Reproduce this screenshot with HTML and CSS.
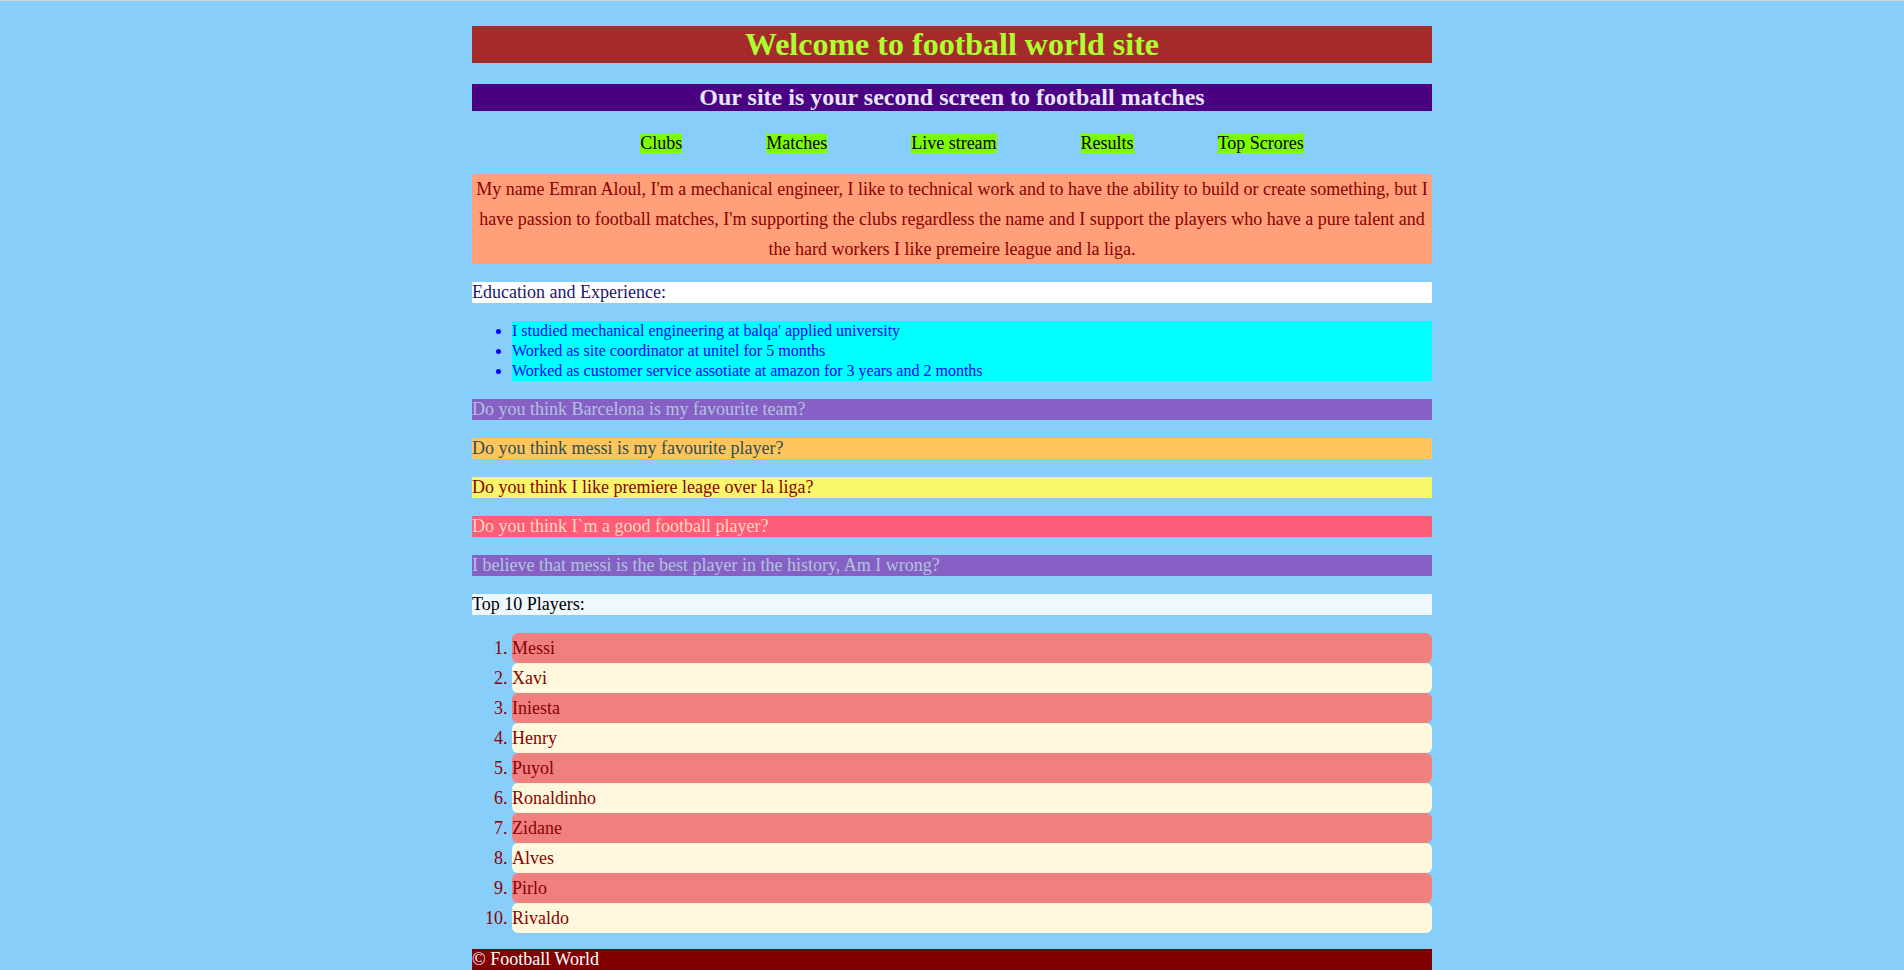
FILE: index.html
```html
<!DOCTYPE html>
<html lang="en">
<head>
<meta charset="utf-8">
<title>Football World</title>
<link rel="stylesheet" href="styles.css">
</head>
<body>
<div class="page">
  <h1 class="title">Welcome to football world site</h1>
  <h2 class="subtitle">Our site is your second screen to football matches</h2>
  <ul class="nav">
    <li><a href="#">Clubs</a></li>
    <li><a href="#">Matches</a></li>
    <li><a href="#">Live stream</a></li>
    <li><a href="#">Results</a></li>
    <li><a href="#">Top Scrores</a></li>
  </ul>
  <p class="about">My name Emran Aloul, I'm a mechanical engineer, I like to technical work and to have the ability to build or create something, but I have passion to football matches, I'm supporting the clubs regardless the name and I support the players who have a pure talent and the hard workers I like premeire league and la liga.</p>
  <div class="bar edu">Education and Experience:</div>
  <ul class="exp">
    <li>I studied mechanical engineering at balqa' applied university</li>
    <li>Worked as site coordinator at unitel for 5 months</li>
    <li>Worked as customer service assotiate at amazon for 3 years and 2 months</li>
  </ul>
  <div class="bar q-purple">Do you think Barcelona is my favourite team?</div>
  <div class="bar q-orange">Do you think messi is my favourite player?</div>
  <div class="bar q-yellow">Do you think I like premiere leage over la liga?</div>
  <div class="bar q-red">Do you think I`m a good football player?</div>
  <div class="bar q-purple">I believe that messi is the best player in the history, Am I wrong?</div>
  <div class="bar top">Top 10 Players:</div>
  <ol class="players">
    <li>Messi</li>
    <li>Xavi</li>
    <li>Iniesta</li>
    <li>Henry</li>
    <li>Puyol</li>
    <li>Ronaldinho</li>
    <li>Zidane</li>
    <li>Alves</li>
    <li>Pirlo</li>
    <li>Rivaldo</li>
  </ol>
  <footer class="footer">© Football World</footer>
</div>
</body>
</html>
```

FILE: styles.css
```css
html {
  border-top: 1px solid #cfd3d6;
  background: #87cefa;
}
body {
  margin: 0;
  background: #87cefa;
  font-family: "Liberation Serif", "Times New Roman", serif;
  font-size: 18px;
}
.page {
  width: 960px;
  margin: 0 auto;
  padding-top: 25px;
  padding-bottom: 40px;
}
.title {
  margin: 0;
  height: 37px;
  line-height: 37px;
  font-size: 32px;
  text-align: center;
  background: #a52a2a;
  color: #adff2f;
}
.subtitle {
  margin: 21px 0 0;
  height: 27px;
  line-height: 27px;
  font-size: 24px;
  text-align: center;
  background: #4b0082;
  color: #e6e6fa;
}
.nav {
  list-style: none;
  margin: 22px 0 0;
  padding: 0 0 0 40px;
  display: flex;
  justify-content: center;
  gap: 84px;
  height: 20px;
}
.nav a {
  display: block;
  line-height: 20px;
  background: #7cfc00;
  color: #000;
  text-decoration: none;
}
.about {
  margin: 21px 0 0;
  line-height: 30px;
  text-align: center;
  background: #ffa07a;
  color: #8b0000;
}
.bar {
  margin-top: 18px;
  height: 21px;
  line-height: 21px;
}
.edu {
  background: #fff;
  color: #191970;
}
.exp {
  margin: 18px 0 0;
  padding-left: 40px;
  font-size: 16px;
  color: #0000ff;
}
.exp li {
  line-height: 20px;
  background: #00ffff;
}
.q-purple {
  background: #8660c4;
  color: #b0c4de;
}
.q-orange {
  background: #ffc55c;
  color: #2f4f4f;
}
.q-yellow {
  background: #f8f86a;
  color: #8b0000;
}
.q-red {
  background: #ff5c7a;
  color: #ffdab9;
}
.top {
  background: #f0f8ff;
  color: #000;
}
.players {
  margin: 18px 0 0;
  padding-left: 40px;
  color: #8b0000;
}
.players li {
  line-height: 30px;
  border-radius: 6px;
  background: #f08080;
}
.players li:nth-child(even) {
  background: #fff8dc;
}
.footer {
  margin-top: 16px;
  height: 21px;
  line-height: 21px;
  background: #800000;
  color: #fff;
}
```
